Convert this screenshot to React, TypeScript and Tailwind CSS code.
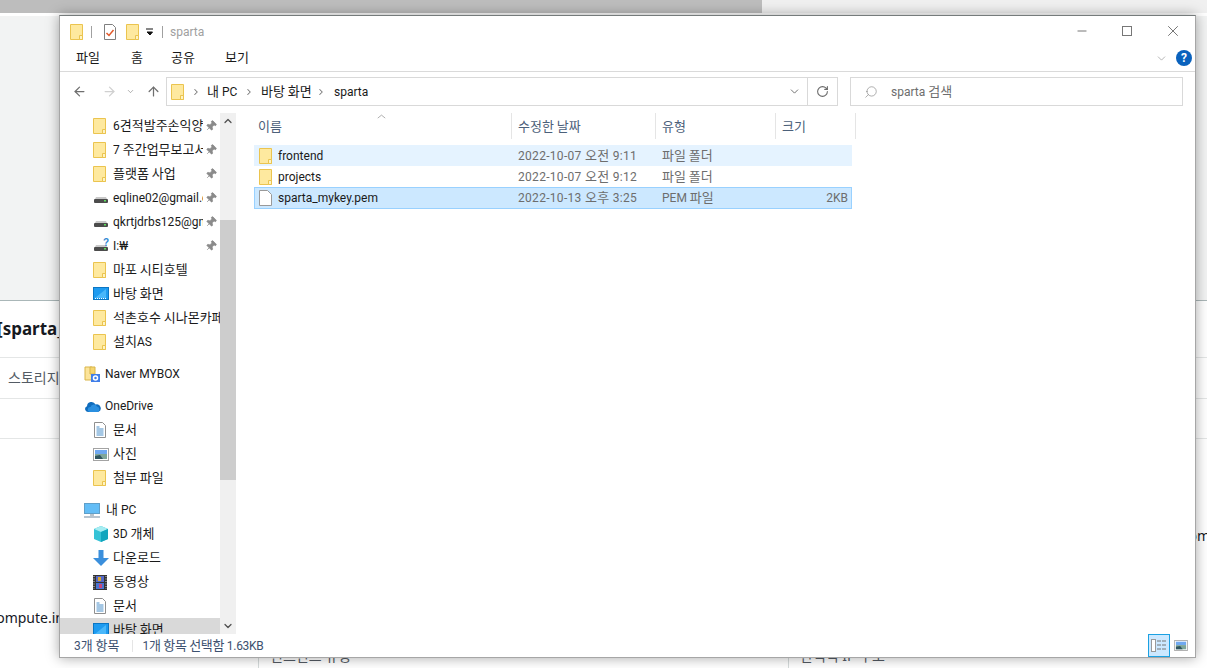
import type { ReactNode } from "react";
import { ChevronDown, ChevronUp, ChevronRight, ArrowLeft, ArrowRight, ArrowUp, RotateCw, Search, Minus, X, Pin } from "lucide-react";

const ui = "font-['Roboto','Noto_Sans_CJK_KR',sans-serif]";

// hangul sits a point larger than latin in the explorer's font
function T({ children }: { children: string }) {
  const parts = children.split(/([가-힣]+(?: [가-힣]+)*)/);
  return (
    <>
      {parts.map((p, i) =>
        i % 2 ? (
          <span key={i} className="font-['Noto_Sans_CJK_KR',sans-serif] text-[13px] leading-none">{p}</span>
        ) : (
          p
        )
      )}
    </>
  );
}

function Folder({ className = "" }: { className?: string }) {
  return (
    <svg width="13" height="16" viewBox="0 0 13 16" className={"shrink-0 " + className}>
      <path d="M.5.5h12v15H.5z" fill="#fee99f" stroke="#ebc44f" />
      <path d="M9.500 11.500h3v4h-3z" fill="#fef3c4" stroke="#ebc44f" />
    </svg>
  );
}

function Drive({ question }: { question?: boolean }) {
  return (
    <svg width="16" height="16" viewBox="0 0 16 16" className="shrink-0">
      <path d="M2 9l1-2h10l1 2z" fill="#c9c9c9" />
      <rect x="1" y="9" width="14" height="4" rx="1" fill="#4c4c4c" />
      <rect x="11" y="10" width="2" height="1.500" fill="#5ee05e" />
      {question && <text x="10" y="8" fontSize="10" fontWeight="700" fill="#2f86d3" fontFamily="Liberation Sans">?</text>}
    </svg>
  );
}

function Desktop() {
  return (
    <svg width="16" height="14" viewBox="0 0 16 14" className="shrink-0">
      <rect x=".5" y=".5" width="15" height="12" fill="#1e9bf0" stroke="#0b76c4" />
      <path d="M2 11L13 2v9z" fill="#49b7fa" />
      <path d="M2 11.500h12" stroke="#fff" strokeDasharray="1 1" />
    </svg>
  );
}

function Doc() {
  return (
    <svg width="14" height="16" viewBox="0 0 14 16" className="shrink-0">
      <path d="M1.500.5h8l3 3v12h-11z" fill="#fff" stroke="#8f8f8f" />
      <path d="M3.500 5h3M3.500 7h7M3.500 9h7M3.500 11h7M3.500 13h7" stroke="#4b8fc9" />
    </svg>
  );
}

function Picture({ w = 16, h = 13 }: { w?: number; h?: number }) {
  return (
    <svg width={w} height={h} viewBox="0 0 16 13" className="shrink-0">
      <rect x=".5" y=".5" width="15" height="12" fill="#fff" stroke="#a3a3a3" />
      <rect x="2" y="2" width="12" height="4" fill="#6fa8f0" />
      <rect x="2" y="6" width="12" height="5" fill="#7fa69a" />
      <path d="M2 8l5-1 3 4H2z" fill="#2f5560" />
    </svg>
  );
}

function Cube() {
  return (
    <svg width="16" height="16" viewBox="0 0 16 16" className="shrink-0">
      <path d="M8 0l7 3v10l-7 3-7-3V3z" fill="#35c2d6" />
      <path d="M1 3l7 3 7-3-7-3z" fill="#a6edf2" />
      <path d="M8 6v10l7-3V3z" fill="#12a5bd" />
    </svg>
  );
}

function Download() {
  return (
    <svg width="16" height="16" viewBox="0 0 16 16" className="shrink-0">
      <path d="M5.500 0h5v8H16l-8 8-8-8h5.500z" fill="#3b8fdc" />
    </svg>
  );
}

function Film() {
  return (
    <svg width="14" height="15" viewBox="0 0 14 15" className="shrink-0">
      <rect width="14" height="15" fill="#333" />
      <rect x="3" y="1" width="8" height="6" fill="#5468c8" />
      <rect x="3" y="8" width="8" height="6" fill="#4a74d0" />
      <rect x="5" y="2" width="3" height="4" fill="#d8a52e" />
      <rect x="6" y="9" width="3" height="4" fill="#c9477a" />
      <path d="M1 1v13M13 1v13" stroke="#ddd" strokeDasharray="1 1.500" />
    </svg>
  );
}

function Cloud() {
  return (
    <svg width="17" height="11" viewBox="0 0 17 11" className="shrink-0">
      <path d="M4 11a3 3 0 01-1-5.800A4.500 4.500 0 0111.500 3.500 3.500 3.500 0 0114 11z" fill="#0f6cbd" />
      <path d="M6 11a2.500 2.500 0 01.500-5 3.500 3.500 0 016.500-.500A3 3 0 0114 11z" fill="#2a8fe0" />
    </svg>
  );
}

function Mybox() {
  return (
    <svg width="16" height="16" viewBox="0 0 16 16" className="shrink-0">
      <path d="M1 1h7v13H1z" fill="#fce49a" stroke="#d9b54a" />
      <path d="M6 1h5v7H6z" fill="#f5d670" stroke="#d9b54a" />
      <rect x="7" y="8" width="9" height="8" fill="#3f7de8" />
      <circle cx="11.500" cy="12" r="2" fill="none" stroke="#fff" strokeWidth="1.500" />
    </svg>
  );
}

function Computer() {
  return (
    <svg width="16" height="15" viewBox="0 0 16 15" className="shrink-0">
      <rect x=".5" y=".5" width="15" height="10" fill="#63bdf6" stroke="#5f9fc9" />
      <path d="M6 11h4v2H6z" fill="#b9c4cc" />
      <path d="M0 14h16" stroke="#9fb1bf" strokeWidth="1.500" />
    </svg>
  );
}

const G = ({ pin, label, icon }: { pin?: boolean; label: string; icon?: ReactNode }) => (
  <div className="flex h-6 items-center pl-[33px]">
    <span className="flex w-[20px] shrink-0 items-center justify-start">{icon ?? <Folder />}</span>
    <span className={(pin ? "w-[90px]" : "w-[107px]") + " overflow-hidden whitespace-nowrap text-[#1a1a1a]"}><T>{label}</T></span>
    {pin && <Pin size={12} strokeWidth={1.500} className="ml-[2px] rotate-45 fill-[#8b8b8b] text-[#8b8b8b]" />}
  </div>
);

const Top = ({ label, icon, gap = "w-[21px]" }: { label: string; icon: ReactNode; gap?: string }) => (
  <div className="flex h-6 items-center pl-[24px]">
    <span className={gap + " flex shrink-0 items-center"}>{icon}</span>
    <span className="whitespace-nowrap text-[#1a1a1a]"><T>{label}</T></span>
  </div>
);

const files = [
  { name: "frontend", date: "2022-10-07 오전 9:11", type: "파일 폴더", size: "", cls: "h-[21px] bg-[#e5f3ff] border border-transparent", icon: <Folder /> },
  { name: "projects", date: "2022-10-07 오전 9:12", type: "파일 폴더", size: "", cls: "h-[21px] border border-transparent", icon: <Folder /> },
  {
    name: "sparta_mykey.pem",
    date: "2022-10-13 오후 3:25",
    type: "PEM 파일",
    size: "2KB",
    cls: "h-[22px] bg-[#cce8ff] border border-[#99d1ff]",
    icon: (
      <svg width="13" height="16" viewBox="0 0 13 16" className="shrink-0">
        <path d="M.5.5h8l4 4v11H.5z" fill="#fff" stroke="#9a9a9a" />
      </svg>
    ),
  },
];

function Background() {
  return (
    <div className="flex h-[668px] w-[1207px] flex-col overflow-hidden bg-white font-['Noto_Sans','Noto_Sans_CJK_KR',sans-serif] text-[#16191f]">
      <div className="flex h-[13px] shrink-0">
        <div className="w-[762px] bg-[#bdbdbd]" />
        <div className="flex-1 bg-[#f0f0f0]" />
      </div>
      <div className="h-[287px] shrink-0 border-t-[3px] border-white bg-[#f2f3f3]" />
      <div className="flex h-[58px] shrink-0 items-center overflow-hidden border-y border-y-[#e4e6e6] border-t-[#aab7b8] text-[17px] font-bold">
        <span className="-ml-[3px]">[sparta_mykey]</span>
      </div>
      <div className="flex h-[41px] shrink-0 items-center border-b border-[#e4e6e6] pb-[2px] pl-2 text-[14px] text-[#545b64]">스토리지</div>
      <div className="h-[40px] shrink-0 border-b border-[#e4e6e6]" />
      <div className="flex h-[107px] shrink-0 items-end justify-end overflow-hidden text-[14px]">
        <span className="-mr-[3px]">ec2.compute.amazonaws.com</span>
      </div>
      <div className="flex h-[82px] w-[64px] shrink-0 items-end justify-end overflow-hidden text-[14px]">
        <span className="shrink-0 whitespace-nowrap">ap-northeast-2.compute.in</span>
      </div>
      <div className="flex min-h-0 flex-1 pl-[258px] text-[14px] text-[#545b64]">
        <span className="w-[530px] border-l border-[#d5dbdb] pl-[11px] pt-[17px]">인스턴스 유형</span>
        <span className="border-l border-[#d5dbdb] pl-[11px] pt-[17px]">탄력적 IP 주소</span>
      </div>
    </div>
  );
}

function Explorer() {
  return (
    <div className={ui + " absolute left-[59px] top-[15px] flex h-[643px] w-[1137px] flex-col overflow-hidden border border-[#a6a6a6] border-t-[#757b7b] bg-white text-[12px] shadow-[0_0_12px_rgba(0,0,0,0.35)]"}>
      {/* title bar */}
      <div className="flex h-[27px] shrink-0 items-center pl-[10px] pt-[5px]">
        <Folder />
        <span className="ml-[8px] h-[12px] w-px bg-[#a0a0a0]" />
        <svg width="14" height="16" viewBox="0 0 14 16" className="ml-[11px] shrink-0">
          <path d="M1.500.5h8l3 3v12h-11z" fill="#fff" stroke="#7f7f7f" />
          <path d="M3.500 9l2.500 2.500L10.500 6" fill="none" stroke="#e2592a" strokeWidth="1.500" />
        </svg>
        <Folder className="ml-[9px]" />
        <svg width="8" height="8" viewBox="0 0 8 8" className="ml-[7px] shrink-0">
          <path d="M0 1h7M1 4h5.500L4 7z" stroke="#111" fill="#111" />
        </svg>
        <span className="ml-[8px] h-[12px] w-px bg-[#a0a0a0]" />
        <span className="ml-[7px] text-[#a0a0a0]">sparta</span>
        <div className="-mt-[2px] ml-auto flex items-center">
          <Minus size={14} strokeWidth={1} absoluteStrokeWidth className="text-[#777]" />
          <span className="ml-[33px] h-[10px] w-[10px] border border-[#777]" />
          <X size={18} strokeWidth={1} absoluteStrokeWidth className="ml-[32px] mr-[13px] text-[#777]" />
        </div>
      </div>
      {/* ribbon tabs */}
      <div className="flex h-[29px] shrink-0 items-center border-b border-[#dadada] pl-[16px] pt-[2px] text-[#1a1a1a]">
        <span className="w-[55px]"><T>파일</T></span>
        <span className="w-[40px]"><T>홈</T></span>
        <span className="w-[54px]"><T>공유</T></span>
        <span><T>보기</T></span>
        <ChevronDown size={13} strokeWidth={1} className="ml-auto text-[#777]" />
        <span className="ml-[8px] mr-[3px] flex h-4 w-4 items-center justify-center rounded-full bg-[#0a62bd] text-[12px] font-bold leading-none text-white">?</span>
      </div>
      {/* address row */}
      <div className="flex h-[41px] shrink-0 items-start pt-[5px]">
        <div className="flex h-[29px] w-[106px] shrink-0 items-center pl-[12px]">
          <ArrowLeft size={15} strokeWidth={2} className="text-[#6f6f6f]" />
          <ArrowRight size={15} strokeWidth={2} className="ml-[15px] text-[#d0d0d0]" />
          <ChevronDown size={9} strokeWidth={1.500} className="ml-[9px] text-[#777]" />
          <ArrowUp size={15} strokeWidth={2} className="ml-[11px] text-[#6f6f6f]" />
        </div>
        <div className="flex h-[29px] w-[672px] shrink-0 items-center border border-[#d9d9d9] pl-[4px] text-[#1a1a1a]">
          <Folder />
          <ChevronRight size={10} strokeWidth={2.500} className="ml-[7px] text-[#777]" />
          <span className="ml-[6px] w-[37px]"><T>내 PC</T></span>
          <ChevronRight size={10} strokeWidth={2.500} className="text-[#777]" />
          <span className="ml-[7px] w-[55px]"><T>바탕 화면</T></span>
          <ChevronRight size={10} strokeWidth={2.500} className="text-[#777]" />
          <span className="ml-[8px]">sparta</span>
          <ChevronDown size={13} strokeWidth={1.500} className="ml-auto mr-[6px] text-[#555]" />
          <span className="flex h-full w-[30px] items-center justify-center border-l border-[#d9d9d9]">
            <RotateCw size={13} strokeWidth={2} className="text-[#6a6a6a]" />
          </span>
        </div>
        <div className="ml-[12px] flex h-[29px] w-[333px] shrink-0 items-center border border-[#d9d9d9] pl-[13px] text-[#6d6d6d]">
          <Search size={14} strokeWidth={1} className="-scale-x-100 text-[#777]" />
          <span className="ml-[13px]"><T>sparta 검색</T></span>
        </div>
      </div>
      {/* nav pane + file list */}
      <div className="flex min-h-0 flex-1">
        <div className="h-full w-[160px] shrink-0 overflow-hidden pt-px">
          <G pin label="6견적발주손익양식" />
          <G pin label="7 주간업무보고서" />
          <G pin label="플랫폼 사업" />
          <G pin label="eqline02@gmail.com" icon={<Drive />} />
          <G pin label="qkrtjdrbs125@gmail" icon={<Drive />} />
          <G pin label="I:₩" icon={<Drive question />} />
          <G label="마포 시티호텔" />
          <G label="바탕 화면" icon={<Desktop />} />
          <G label="석촌호수 시나몬카페" />
          <G label="설치AS" />
          <div className="mt-2">
            <Top label="Naver MYBOX" icon={<Mybox />} />
          </div>
          <div className="mt-2">
            <Top label="OneDrive" icon={<Cloud />} />
          </div>
          <G label="문서" icon={<Doc />} />
          <G label="사진" icon={<Picture />} />
          <G label="첨부 파일" />
          <div className="mt-2">
            <Top label="내 PC" icon={<Computer />} gap="w-[22px]" />
          </div>
          <G label="3D 개체" icon={<Cube />} />
          <G label="다운로드" icon={<Download />} />
          <G label="동영상" icon={<Film />} />
          <G label="문서" icon={<Doc />} />
          <div className="bg-[#d9d9d9]">
            <G label="바탕 화면" icon={<Desktop />} />
          </div>
        </div>
        {/* scrollbar */}
        <div className="flex h-full w-[16px] shrink-0 flex-col bg-[#f0f0f0]">
          <div className="flex h-[16px] shrink-0 items-center justify-center">
            <ChevronUp size={12} strokeWidth={2.500} className="text-[#505050]" />
          </div>
          <div className="mt-[91px] h-[260px] bg-[#cdcdcd]" />
          <div className="mt-auto flex h-[16px] shrink-0 items-center justify-center">
            <ChevronDown size={12} strokeWidth={2.500} className="text-[#505050]" />
          </div>
        </div>
        {/* file list */}
        <div className="relative min-w-0 flex-1 pl-[18px]">
          <ChevronUp size={11} strokeWidth={1} className="absolute left-[140px] top-[-2px] scale-x-125 text-[#666]" />
          <div className="flex h-[26px] items-center text-[#4c607a]">
            <span className="h-full w-[258px] border-r border-[#e5e5e5] pl-[4px] pt-[1px] leading-[26px]"><T>이름</T></span>
            <span className="h-full w-[144px] border-r border-[#e5e5e5] pl-[6px] pt-[1px] leading-[26px]"><T>수정한 날짜</T></span>
            <span className="h-full w-[120px] border-r border-[#e5e5e5] pl-[6px] pt-[1px] leading-[26px]"><T>유형</T></span>
            <span className="h-full w-[80px] border-r border-[#e5e5e5] pl-[6px] pt-[1px] leading-[26px]"><T>크기</T></span>
          </div>
          <div className="mt-[6px] w-[598px]">
            {files.map(f => (
              <div key={f.name} className={"flex items-center " + f.cls}>
                <span className="flex w-[23px] shrink-0 justify-start pl-[4px]">{f.icon}</span>
                <span className="w-[234px] text-[#1a1a1a]">{f.name}</span>
                <span className="w-[144px] pl-[6px] tracking-[0.3px] text-[#6d6d6d]"><T>{f.date}</T></span>
                <span className="w-[110px] pl-[6px] text-[#6d6d6d]"><T>{f.type}</T></span>
                <span className="flex-1 pr-[3px] text-right text-[#6d6d6d]">{f.size}</span>
              </div>
            ))}
          </div>
        </div>
      </div>
      {/* status bar */}
      <div className="flex h-[23px] shrink-0 items-center pl-[14px] text-[#3c5170]">
        <span><T>3개 항목</T></span>
        <span className="ml-[12px] h-[12px] w-px bg-[#e5e5e5]" />
        <span className="ml-[10px] tracking-[-0.3px]"><T>1개 항목 선택함 1.63KB</T></span>
        <div className="ml-auto flex h-full items-center pr-[7px]">
          <span className="flex h-full w-[22px] flex-col items-center justify-center gap-[2px] border border-[#1ba1e2] bg-[#cce8ff]">
            <svg width="16" height="13" viewBox="0 0 16 13">
              <rect x=".5" y=".5" width="4" height="12" fill="#fff" stroke="#999" />
              <path d="M6 2h4M11 2h4M6 6h4M11 6h4M6 10h4M11 10h4" stroke="#777" />
            </svg>
          </span>
          <span className="ml-[4px]"><Picture w={14} h={11} /></span>
        </div>
      </div>
    </div>
  );
}

export default function App() {
  return (
    <div className="relative h-[668px] w-[1207px] overflow-hidden">
      <Background />
      <Explorer />
    </div>
  );
}
